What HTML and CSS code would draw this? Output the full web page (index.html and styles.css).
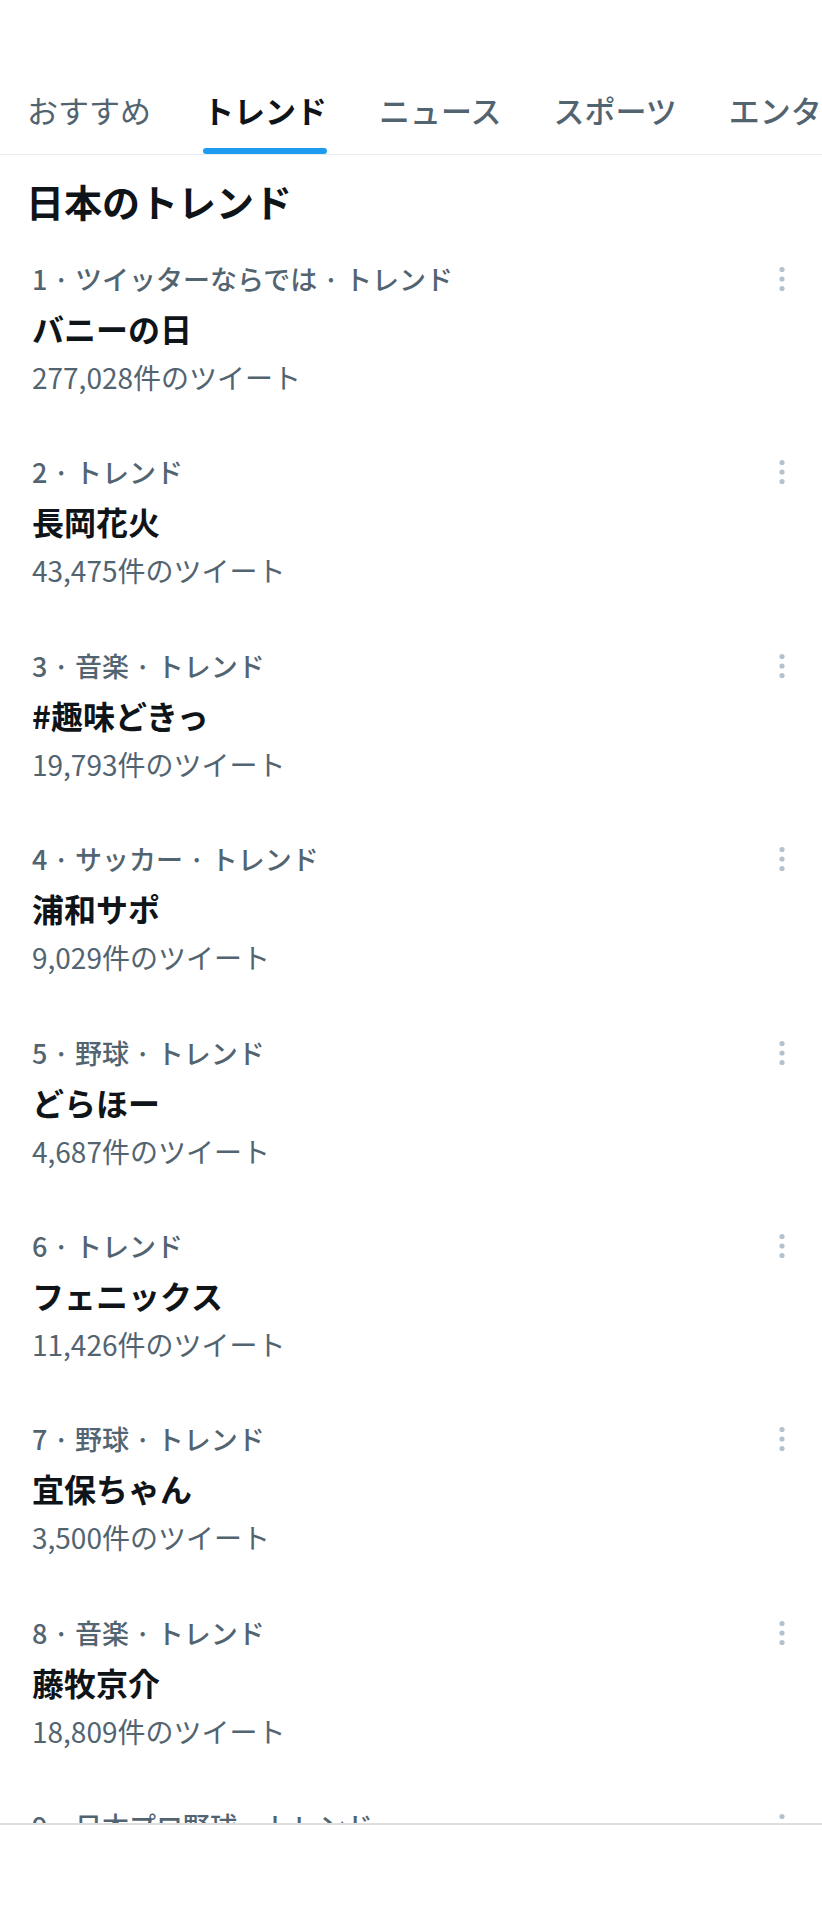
FILE: index.html
```html
<!DOCTYPE html>
<html lang="ja">
<head>
<meta charset="utf-8">
<title>日本のトレンド</title>
<link rel="stylesheet" href="styles.css">
</head>
<body>
<div class="page">
  <nav class="tabs">
    <div class="tab tab-light"><span class="tab-label">おすすめ</span><span class="tab-bar"></span></div>
    <div class="tab tab-active"><span class="tab-label">トレンド</span><span class="tab-bar"></span></div>
    <div class="tab"><span class="tab-label">ニュース</span><span class="tab-bar"></span></div>
    <div class="tab"><span class="tab-label">スポーツ</span><span class="tab-bar"></span></div>
    <div class="tab"><span class="tab-label">エンタメ</span><span class="tab-bar"></span></div>
  </nav>

  <h1 class="heading">日本のトレンド</h1>

  <ul class="trends">
    <li class="trend">
      <div class="trend-body">
        <div class="meta">1 · ツイッターならでは · トレンド</div>
        <div class="title">バニーの日</div>
        <div class="count">277,028件のツイート</div>
      </div>
      <svg class="more" viewBox="0 0 20 36" width="20" height="36"><circle cx="10" cy="8.5" r="2.6"/><circle cx="10" cy="18" r="2.6"/><circle cx="10" cy="27.5" r="2.6"/></svg>
    </li>
    <li class="trend">
      <div class="trend-body">
        <div class="meta">2 · トレンド</div>
        <div class="title">長岡花火</div>
        <div class="count">43,475件のツイート</div>
      </div>
      <svg class="more" viewBox="0 0 20 36" width="20" height="36"><circle cx="10" cy="8.5" r="2.6"/><circle cx="10" cy="18" r="2.6"/><circle cx="10" cy="27.5" r="2.6"/></svg>
    </li>
    <li class="trend">
      <div class="trend-body">
        <div class="meta">3 · 音楽 · トレンド</div>
        <div class="title">#趣味どきっ</div>
        <div class="count">19,793件のツイート</div>
      </div>
      <svg class="more" viewBox="0 0 20 36" width="20" height="36"><circle cx="10" cy="8.5" r="2.6"/><circle cx="10" cy="18" r="2.6"/><circle cx="10" cy="27.5" r="2.6"/></svg>
    </li>
    <li class="trend">
      <div class="trend-body">
        <div class="meta">4 · サッカー · トレンド</div>
        <div class="title">浦和サポ</div>
        <div class="count">9,029件のツイート</div>
      </div>
      <svg class="more" viewBox="0 0 20 36" width="20" height="36"><circle cx="10" cy="8.5" r="2.6"/><circle cx="10" cy="18" r="2.6"/><circle cx="10" cy="27.5" r="2.6"/></svg>
    </li>
    <li class="trend">
      <div class="trend-body">
        <div class="meta">5 · 野球 · トレンド</div>
        <div class="title">どらほー</div>
        <div class="count">4,687件のツイート</div>
      </div>
      <svg class="more" viewBox="0 0 20 36" width="20" height="36"><circle cx="10" cy="8.5" r="2.6"/><circle cx="10" cy="18" r="2.6"/><circle cx="10" cy="27.5" r="2.6"/></svg>
    </li>
    <li class="trend">
      <div class="trend-body">
        <div class="meta">6 · トレンド</div>
        <div class="title">フェニックス</div>
        <div class="count">11,426件のツイート</div>
      </div>
      <svg class="more" viewBox="0 0 20 36" width="20" height="36"><circle cx="10" cy="8.5" r="2.6"/><circle cx="10" cy="18" r="2.6"/><circle cx="10" cy="27.5" r="2.6"/></svg>
    </li>
    <li class="trend">
      <div class="trend-body">
        <div class="meta">7 · 野球 · トレンド</div>
        <div class="title">宜保ちゃん</div>
        <div class="count">3,500件のツイート</div>
      </div>
      <svg class="more" viewBox="0 0 20 36" width="20" height="36"><circle cx="10" cy="8.5" r="2.6"/><circle cx="10" cy="18" r="2.6"/><circle cx="10" cy="27.5" r="2.6"/></svg>
    </li>
    <li class="trend">
      <div class="trend-body">
        <div class="meta">8 · 音楽 · トレンド</div>
        <div class="title">藤牧京介</div>
        <div class="count">18,809件のツイート</div>
      </div>
      <svg class="more" viewBox="0 0 20 36" width="20" height="36"><circle cx="10" cy="8.5" r="2.6"/><circle cx="10" cy="18" r="2.6"/><circle cx="10" cy="27.5" r="2.6"/></svg>
    </li>
    <li class="trend">
      <div class="trend-body">
        <div class="meta">9 · 日本プロ野球 · トレンド</div>
      </div>
      <svg class="more" viewBox="0 0 20 36" width="20" height="36"><circle cx="10" cy="8.5" r="2.6"/><circle cx="10" cy="18" r="2.6"/><circle cx="10" cy="27.5" r="2.6"/></svg>
    </li>
  </ul>

  <div class="bottom-bar"></div>
</div>
</body>
</html>
```

FILE: styles.css
```css
* { box-sizing: border-box; }

html, body {
  margin: 0;
  padding: 0;
  background: #ffffff;
}

body {
  font-family: "Noto Sans CJK JP", "Noto Sans", sans-serif;
  color: #0f1419;
}

.page {
  position: relative;
  width: 822px;
  height: 1920px;
  overflow: hidden;
  background: #ffffff;
}

/* Tabs */
.tabs {
  display: flex;
  gap: 52px;
  padding: 90px 0 0 27px;
  border-bottom: 1px solid #e6ecf0;
  white-space: nowrap;
  overflow: hidden;
}

.tab {
  display: flex;
  flex-direction: column;
  flex: none;
}

.tab-label {
  font-size: 31px;
  line-height: 40px;
  font-weight: 500;
  color: #536471;
}

.tab-light .tab-label {
  font-weight: 400;
}

.tab-active .tab-label {
  font-weight: 700;
  color: #0f1419;
}

.tab-bar {
  display: block;
  height: 6px;
  margin-top: 18px;
  border-radius: 3px;
  background: transparent;
}

.tab-active .tab-bar {
  background: #1d9bf0;
}

/* Heading */
.heading {
  margin: 24px 0 0;
  padding: 0 0 0 26px;
  font-size: 38px;
  line-height: 44px;
  font-weight: 700;
  color: #0f1419;
}

/* Trends list */
.trends {
  list-style: none;
  margin: 0;
  padding: 8px 0 0;
}

.trend {
  display: flex;
  align-items: flex-start;
  padding: 30px 30px 29.4px 32px;
}

.trend-body {
  flex: 1;
  min-width: 0;
}

.meta {
  font-size: 27px;
  line-height: 36px;
  font-weight: 500;
  color: #536471;
  white-space: nowrap;
}

.title {
  margin-top: 10px;
  font-size: 32px;
  line-height: 42px;
  font-weight: 700;
  color: #0f1419;
}

.count {
  margin-top: 10px;
  font-size: 28px;
  line-height: 36px;
  font-weight: 400;
  color: #536471;
}

.more {
  flex: none;
  display: block;
  fill: #b3c2cd;
}

/* Bottom bar overlay */
.bottom-bar {
  position: absolute;
  left: 0;
  right: 0;
  bottom: 0;
  height: 97px;
  background: #ffffff;
  border-top: 2px solid #dedede;
}
```
